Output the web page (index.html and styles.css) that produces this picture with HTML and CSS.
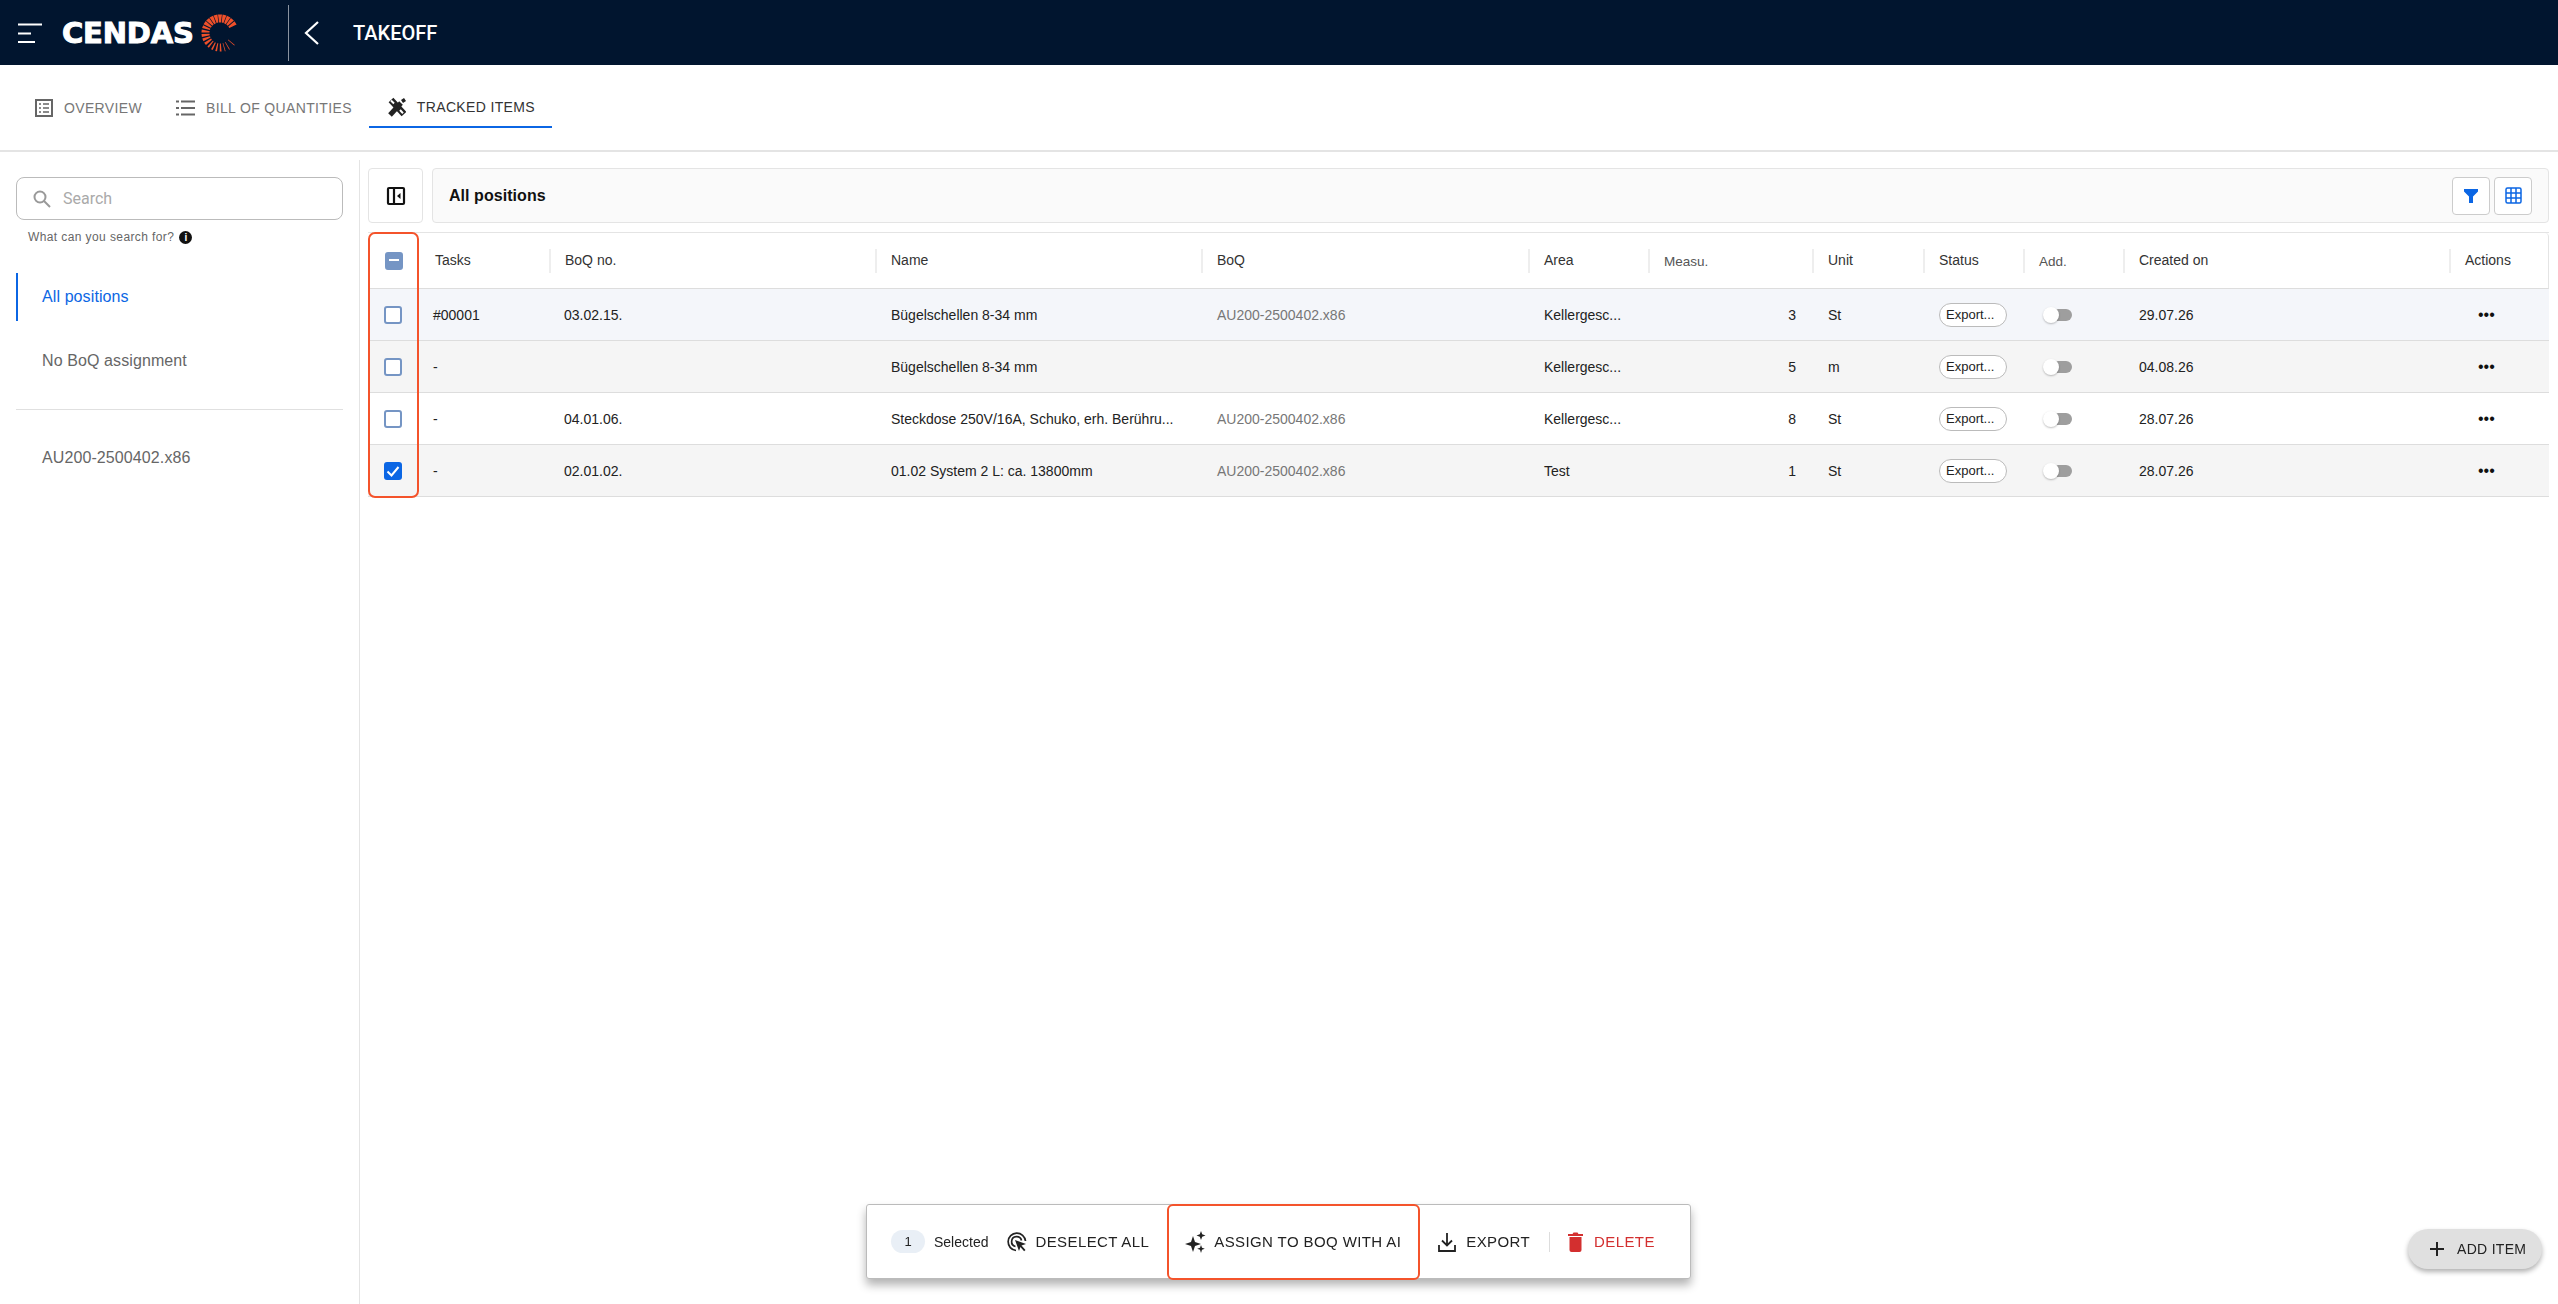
FILE: index.html
```html
<!DOCTYPE html>
<html lang="en">
<head>
    <meta charset="UTF-8">
    <meta name="viewport" content="width=device-width, initial-scale=1.0">
    <title>Takeoff - Tracked Items</title>
    <link rel="stylesheet" href="styles.css">
</head>
<body>
    <div class="topbar">
        <svg class="burger" width="24" height="20" viewBox="0 0 24 20"><path d="M0 1.500h24M0 10.500h13M0 19h17" stroke="#fff" stroke-width="2" fill="none"/></svg>
        <span class="brand">CENDAS</span>
        <svg class="sunburst" width="40" height="40" viewBox="-20 -20 40 40" fill="#f0502a">
            <defs>
                <path id="ray-a" d="M-0.900 -10.500H0.900L2 -18.500H-2z"/>
                <path id="ray-b" d="M-0.700 -10.500H0.700L1.500 -18.500H-1.500z"/>
                <path id="ray-c" d="M-0.500 -10.500H0.500L0.900 -18.500H-0.900z"/>
                <path id="ray-d" d="M-0.300 -10.500H0.300L0.400 -19H-0.400z"/>
            </defs>
            <use href="#ray-a" transform="rotate(57)"/>
            <use href="#ray-a" transform="rotate(42)"/>
            <use href="#ray-a" transform="rotate(28)"/>
            <use href="#ray-a" transform="rotate(14)"/>
            <use href="#ray-a" transform="rotate(0)"/>
            <use href="#ray-a" transform="rotate(-14)"/>
            <use href="#ray-a" transform="rotate(-28)"/>
            <use href="#ray-a" transform="rotate(-42)"/>
            <use href="#ray-a" transform="rotate(-56)"/>
            <use href="#ray-b" transform="rotate(-70)"/>
            <use href="#ray-b" transform="rotate(-84)"/>
            <use href="#ray-b" transform="rotate(-98)"/>
            <use href="#ray-b" transform="rotate(-112)"/>
            <use href="#ray-b" transform="rotate(-126)"/>
            <use href="#ray-c" transform="rotate(-140)"/>
            <use href="#ray-c" transform="rotate(-154)"/>
            <use href="#ray-c" transform="rotate(-168)"/>
            <use href="#ray-c" transform="rotate(-182)"/>
            <use href="#ray-d" transform="rotate(-196)"/>
            <use href="#ray-d" transform="rotate(-210)"/>
            <use href="#ray-d" transform="rotate(-230)"/>
        </svg>
        <div class="topbar-sep"></div>
        <svg class="back" width="16" height="24" viewBox="0 0 16 24"><path d="M14 1L2 12l12 11" stroke="#fff" stroke-width="2.200" fill="none"/></svg>
        <span class="page-title">TAKEOFF</span>
    </div>

    <div class="tabs">
        <div class="tab">
            <svg width="18" height="20" viewBox="0 0 18 20" fill="none" stroke="#666"><rect x="1" y="2" width="16" height="16" stroke-width="2"/><path d="M4 6h2M8 6h6M4 10h2M8 10h6M4 14h2M8 14h6" stroke-width="1.600"/></svg>
            OVERVIEW
        </div>
        <div class="tab tab-boq">
            <svg width="19" height="20" viewBox="0 0 19 20" fill="none" stroke="#666" stroke-width="2"><path d="M0 3.500h3M0 10h3M0 16.500h3M5 3.500h14M5 10h14M5 16.500h14"/></svg>
            BILL OF QUANTITIES
        </div>
        <div class="tab tab-active">
            <svg width="18" height="20" viewBox="0 0 18 20" fill="none"><path d="M2 18L13 6" stroke="#222" stroke-width="5"/><path d="M13 3l3-2 2 3-3 2z" fill="#222"/><path d="M3 3l13 14" stroke="#222" stroke-width="6.500"/><path d="M3 3.500l3 3M12 13l3 3.200" stroke="#fff" stroke-width="2"/></svg>
            TRACKED ITEMS
        </div>
    </div>

    <div class="main">
        <div class="sidebar">
            <div class="search">
                <svg width="18" height="18" viewBox="0 0 18 18" fill="none" stroke="#999" stroke-width="2"><circle cx="7" cy="7" r="5.500"/><path d="M11 11l6 6"/></svg>
                <span>Search</span>
            </div>
            <div class="search-help">What can you search for? <span class="info">i</span></div>
            <div class="nav-item nav-active">All positions</div>
            <div class="nav-item">No BoQ assignment</div>
            <div class="nav-sep"></div>
            <div class="nav-item">AU200-2500402.x86</div>
        </div>

        <div class="content">
            <div class="toolbar">
                <div class="toggle-btn">
                    <svg width="20" height="20" viewBox="0 0 20 20" fill="none" stroke="#111" stroke-width="2.200"><rect x="2" y="2" width="16" height="16" rx="1"/><path d="M8 2v16"/><path d="M14.500 7v6l-3.500-3z" fill="#111" stroke="none"/></svg>
                </div>
                <div class="title-bar">
                    <span class="title">All positions</span>
                    <div class="title-actions">
                        <div class="icon-btn">
                            <svg width="14" height="14" viewBox="0 0 14 14"><path d="M0 0h14v2.500L9 7.500V14H5V7.500L0 2.500z" fill="#0b66e4"/></svg>
                        </div>
                        <div class="icon-btn">
                            <svg width="17" height="17" viewBox="0 0 17 17" fill="none" stroke="#0b66e4" stroke-width="1.500"><rect x="1" y="1" width="15" height="15" rx="1.500"/><path d="M6 1v15M11 1v15M1 6h15M1 11h15"/></svg>
                        </div>
                    </div>
                </div>
            </div>

            <div class="table">
                <div class="select-outline"></div>
                <div class="row row-head">
                    <div class="cell"><span class="check check-mixed"></span></div>
                    <div class="cell"><span class="head-label">Tasks</span></div>
                    <div class="cell"><span class="head-label">BoQ no.</span></div>
                    <div class="cell"><span class="head-label">Name</span></div>
                    <div class="cell"><span class="head-label">BoQ</span></div>
                    <div class="cell"><span class="head-label">Area</span></div>
                    <div class="cell"><span class="head-label muted">Measu.</span></div>
                    <div class="cell"><span class="head-label">Unit</span></div>
                    <div class="cell"><span class="head-label">Status</span></div>
                    <div class="cell"><span class="head-label muted">Add.</span></div>
                    <div class="cell"><span class="head-label">Created on</span></div>
                    <div class="cell"><span class="head-label">Actions</span></div>
                </div>

                <div class="row row-blue">
                    <div class="cell"><span class="check"></span></div>
                    <div class="cell">#00001</div>
                    <div class="cell">03.02.15.</div>
                    <div class="cell">Bügelschellen 8-34 mm</div>
                    <div class="cell grey">AU200-2500402.x86</div>
                    <div class="cell"><span class="clip">Kellergesc...</span></div>
                    <div class="cell num">3</div>
                    <div class="cell">St</div>
                    <div class="cell"><span class="chip">Export...</span></div>
                    <div class="cell"><span class="switch"></span></div>
                    <div class="cell">29.07.26</div>
                    <div class="cell"><span class="dots">•••</span></div>
                </div>
                <div class="row row-grey">
                    <div class="cell"><span class="check"></span></div>
                    <div class="cell">-</div>
                    <div class="cell"></div>
                    <div class="cell">Bügelschellen 8-34 mm</div>
                    <div class="cell grey"></div>
                    <div class="cell"><span class="clip">Kellergesc...</span></div>
                    <div class="cell num">5</div>
                    <div class="cell">m</div>
                    <div class="cell"><span class="chip">Export...</span></div>
                    <div class="cell"><span class="switch"></span></div>
                    <div class="cell">04.08.26</div>
                    <div class="cell"><span class="dots">•••</span></div>
                </div>
                <div class="row">
                    <div class="cell"><span class="check"></span></div>
                    <div class="cell">-</div>
                    <div class="cell">04.01.06.</div>
                    <div class="cell"><span class="clip">Steckdose 250V/16A, Schuko, erh. Berühru...</span></div>
                    <div class="cell grey">AU200-2500402.x86</div>
                    <div class="cell"><span class="clip">Kellergesc...</span></div>
                    <div class="cell num">8</div>
                    <div class="cell">St</div>
                    <div class="cell"><span class="chip">Export...</span></div>
                    <div class="cell"><span class="switch"></span></div>
                    <div class="cell">28.07.26</div>
                    <div class="cell"><span class="dots">•••</span></div>
                </div>
                <div class="row row-grey">
                    <div class="cell"><span class="check check-on"><svg width="18" height="18" viewBox="0 0 18 18"><path d="M3.500 9.500l4 4 7-8.500" stroke="#fff" stroke-width="2" fill="none"/></svg></span></div>
                    <div class="cell">-</div>
                    <div class="cell">02.01.02.</div>
                    <div class="cell">01.02 System 2 L: ca. 13800mm</div>
                    <div class="cell grey">AU200-2500402.x86</div>
                    <div class="cell">Test</div>
                    <div class="cell num">1</div>
                    <div class="cell">St</div>
                    <div class="cell"><span class="chip">Export...</span></div>
                    <div class="cell"><span class="switch"></span></div>
                    <div class="cell">28.07.26</div>
                    <div class="cell"><span class="dots">•••</span></div>
                </div>
            </div>
        </div>
    </div>

    <div class="action-bar">
        <span class="count">1</span>
        <span class="selected">Selected</span>
        <span class="action action-deselect">
            <svg width="20" height="20" viewBox="0 0 20 20" fill="none" stroke="#222" stroke-width="1.700"><path d="M9 18.500A8.700 8.700 0 1 1 18.500 9"/><path d="M8.500 14.500A5 5 0 1 1 14.500 8.500"/><path d="M8 8l11 4-4.500 1.600L18.500 18l-1.400 1.200-3.700-4.200L12 19z" fill="#222" stroke="none"/></svg>
            DESELECT ALL
        </span>
        <span class="action action-ai">
            <svg width="21" height="22" viewBox="0 0 21 22" fill="#222"><path d="M8 5l2 6 6 2-6 2-2 6-2-6-6-2 6-2z"/><path d="M16 0l1.200 3.300L20.500 4.500l-3.300 1.200L16 9l-1.200-3.300L11.500 4.500l3.300-1.200z"/><path d="M16 14l1 2.800 2.800 1-2.800 1L16 22l-1-3.200-2.800-1 2.800-1z"/></svg>
            ASSIGN TO BOQ WITH AI
        </span>
        <span class="action action-export">
            <svg width="18" height="20" viewBox="0 0 18 20" fill="none" stroke="#222" stroke-width="1.800"><path d="M9 1v12M4 8.500l5 5 5-5"/><path d="M1 13v6h16v-6"/></svg>
            EXPORT
        </span>
        <span class="action-sep"></span>
        <span class="action action-delete">
            <svg width="15" height="20" viewBox="0 0 15 20" fill="#d32f2f"><path d="M1.500 5h12v13a2 2 0 0 1-2 2h-8a2 2 0 0 1-2-2z"/><path d="M0 2h4.500l1-1.500h4l1 1.500H15v2H0z"/></svg>
            DELETE
        </span>
    </div>

    <div class="add-item">
        <svg width="16" height="16" viewBox="0 0 16 16"><path d="M8 1v14M1 8h14" stroke="#222" stroke-width="2"/></svg>
        ADD ITEM
    </div>
</body>
</html>
```

FILE: styles.css
```css
* {
    box-sizing: border-box;
}
body {
    margin: 0;
    height: 100vh;
    overflow: hidden;
    background: #fff;
    color: #222;
    font-family: "Liberation Sans", Arial, sans-serif;
    font-size: 14px;
    display: flex;
    flex-direction: column;
}

/* top bar */
.topbar {
    height: 65px;
    flex: none;
    background: #01152f;
    display: flex;
    align-items: center;
    padding-left: 18px;
}
.burger {
    flex: none;
}
.brand {
    width: 131px;
    flex: none;
    margin-left: 20px;
    color: #fff;
    font-family: "DejaVu Sans", sans-serif;
    font-size: 29px;
    font-weight: bold;
    letter-spacing: -0.2px;
    -webkit-text-stroke: 1px #fff;
}
.sunburst {
    margin-left: 7px;
    flex: none;
}
.topbar-sep {
    width: 1px;
    height: 56px;
    margin-left: 48px;
    background: #8a93a0;
}
.back {
    margin-left: 15px;
}
.page-title {
    margin-left: 33px;
    color: #fff;
    font-family: Roboto, sans-serif;
    font-size: 20px;
    font-weight: 500;
}

/* tabs */
.tabs {
    height: 87px;
    flex: none;
    display: flex;
    padding: 22px 0 0 23px;
    border-bottom: 2px solid #e4e4e4;
}
.tab {
    height: 41px;
    padding: 0 12px;
    display: flex;
    align-items: center;
    gap: 11px;
    color: #777;
    font-size: 14px;
    letter-spacing: 0.35px;
}
.tab-boq {
    margin-left: 10px;
}
.tab-active {
    margin-left: 5px;
    color: #333;
    padding: 0 17px 0 19px;
    border-bottom: 2px solid #0b66e4;
}

/* page body */
.main {
    flex: 1;
    display: flex;
    margin-top: 8px;
    min-height: 0;
}
.sidebar {
    width: 360px;
    flex: none;
    border-right: 1px solid #e4e4e4;
    padding: 17px 16px 0;
}
.search {
    height: 43px;
    width: 327px;
    border: 1px solid #bbb;
    border-radius: 8px;
    display: flex;
    align-items: center;
    gap: 12px;
    padding-left: 16px;
    color: #aaa;
    font-family: Roboto, sans-serif;
    font-size: 16px;
}
.search-help {
    margin: 9px 0 0 12px;
    display: flex;
    align-items: center;
    gap: 5px;
    height: 16px;
    color: #666;
    font-size: 12px;
    letter-spacing: 0.4px;
}
.info {
    width: 13px;
    height: 13px;
    border-radius: 50%;
    background: #111;
    color: #fff;
    font-size: 10px;
    font-weight: bold;
    line-height: 13px;
    text-align: center;
    letter-spacing: 0;
}
.nav-item {
    height: 48px;
    margin-top: 16px;
    padding-left: 26px;
    width: 327px;
    display: flex;
    align-items: center;
    color: #666;
    font-size: 16px;
    letter-spacing: 0.1px;
}
.nav-active {
    margin-top: 28px;
    padding-left: 24px;
    border-left: 2px solid #0b66e4;
    color: #0b66e4;
}
.nav-sep {
    width: 327px;
    height: 1px;
    margin-top: 24px;
    background: #e0e0e0;
}
.nav-sep + .nav-item {
    margin-top: 24px;
}
.content {
    flex: 1;
    min-width: 0;
    padding: 8px 9px 0 8px;
}

/* toolbar */
.toolbar {
    display: flex;
    gap: 9px;
    height: 55px;
}
.toggle-btn {
    width: 55px;
    flex: none;
    border: 1px solid #e4e4e4;
    border-radius: 4px;
    display: flex;
    align-items: center;
    justify-content: center;
}
.title-bar {
    flex: 1;
    border: 1px solid #e4e4e4;
    border-radius: 4px;
    background: #fafafa;
    display: flex;
    align-items: center;
    justify-content: space-between;
    padding: 0 16px;
}
.title {
    font-size: 16px;
    font-weight: bold;
    letter-spacing: 0.05px;
    color: #111;
}
.title-actions {
    display: flex;
    gap: 4px;
}
.icon-btn {
    width: 38px;
    height: 38px;
    border: 1px solid #ccc;
    border-radius: 4px;
    background: #fff;
    display: flex;
    align-items: center;
    justify-content: center;
}

/* table */
.table {
    position: relative;
    margin-top: 9px;
    border-top: 1px solid #e4e4e4;
}
.select-outline {
    position: absolute;
    left: 0;
    top: -1px;
    width: 51px;
    height: 266px;
    border: 2px solid #f4532b;
    border-radius: 7px;
    z-index: 2;
}
.row {
    display: grid;
    grid-template-columns: 51px 130px 326px 326px 327px 120px 164px 111px 100px 100px 326px 100px;
    height: 52px;
    align-items: center;
    border-bottom: 1px solid #ddd;
    font-size: 14px;
    color: #222;
}
.row-head {
    height: 56px;
    border-right: 1px solid #e4e4e4;
    border-radius: 0 4px 0 0;
}
.row-blue {
    background: #f4f6fa;
}
.row-grey {
    background: #f5f5f5;
}
.cell {
    padding: 0 16px;
    min-width: 0;
    white-space: nowrap;
}
.row .cell:first-child {
    padding: 0 0 0 16px;
    display: flex;
}
.cell:nth-child(2) {
    padding-left: 14px;
}
.cell:nth-child(3) {
    padding-left: 15px;
}
.row-head .cell {
    height: 24px;
    display: flex;
    align-items: center;
    padding-bottom: 1px;
}
.row-head .cell + .cell + .cell {
    border-left: 2px solid #eee;
    padding-left: 14px;
}
.row-head .cell:nth-child(2) {
    padding-left: 16px;
}
.head-label {
    color: #333;
}
.muted {
    color: #555;
    font-size: 13.5px;
    padding-top: 2px;
}
.grey {
    color: #777;
}
.num {
    text-align: right;
}
.clip {
    display: block;
    overflow: hidden;
    white-space: nowrap;
}
.check {
    width: 18px;
    height: 18px;
    display: block;
    border: 2px solid #7595c4;
    border-radius: 3px;
    background: #fff;
    position: relative;
}
.check-mixed {
    background: #7595c4;
    margin-left: 1px;
}
.check-mixed::after {
    content: "";
    position: absolute;
    left: 2px;
    top: 5px;
    width: 10px;
    height: 2px;
    background: #fff;
}
.check-on {
    background: #0b66e4;
    border: none;
}
.check-on svg {
    display: block;
}
.chip {
    display: block;
    width: 68px;
    height: 24px;
    border: 1px solid #bbb;
    border-radius: 12px;
    background: #fff;
    padding-left: 6px;
    font-size: 13px;
    line-height: 22px;
}
.switch {
    display: block;
    width: 29px;
    height: 16px;
    margin-left: 4px;
    position: relative;
}
.switch::before {
    content: "";
    position: absolute;
    left: 6px;
    right: 0;
    top: 2px;
    height: 12px;
    background: #9e9e9e;
    border-radius: 6px;
}
.switch::after {
    content: "";
    position: absolute;
    left: 0;
    top: 0;
    width: 16px;
    height: 16px;
    border-radius: 50%;
    background: #fff;
    box-shadow: 0 1px 2px rgba(0, 0, 0, 0.25);
}
.dots {
    display: block;
    font-size: 16px;
    margin-left: 13px;
    color: #111;
}

/* floating bars */
.action-bar {
    position: fixed;
    left: 866px;
    top: 1204px;
    width: 825px;
    height: 75px;
    background: #fff;
    border: 1px solid #bbb;
    border-radius: 3px;
    box-shadow: 0 6px 10px rgba(0, 0, 0, 0.3);
    display: flex;
    align-items: center;
    padding-left: 24px;
    font-size: 15px;
}
.count {
    width: 34px;
    height: 23px;
    border-radius: 12px;
    background: #e9eff6;
    text-align: center;
    line-height: 23px;
    font-size: 13px;
}
.selected {
    margin-left: 9px;
    font-size: 14px;
}
.action {
    display: flex;
    align-items: center;
    gap: 8px;
    letter-spacing: 0.4px;
}
.action-deselect {
    margin-left: 19px;
}
.action-ai {
    margin-left: 18px;
    height: 76px;
    width: 253px;
    padding-left: 16px;
    border: 2px solid #f4532b;
    border-radius: 6px;
}
.action-export {
    margin-left: 18px;
    gap: 10px;
}
.action-sep {
    width: 1px;
    height: 20px;
    margin-left: 19px;
    background: #ddd;
}
.action-delete {
    margin-left: 18px;
    color: #d32f2f;
    gap: 11px;
}
.add-item {
    position: fixed;
    left: 2408px;
    top: 1229px;
    width: 134px;
    height: 40px;
    border-radius: 20px;
    background: #e0e0e0;
    box-shadow: 0 3px 5px rgba(0, 0, 0, 0.3);
    display: flex;
    align-items: center;
    gap: 12px;
    padding-left: 21px;
    font-size: 14px;
    letter-spacing: 0.3px;
    color: #222;
}
```
